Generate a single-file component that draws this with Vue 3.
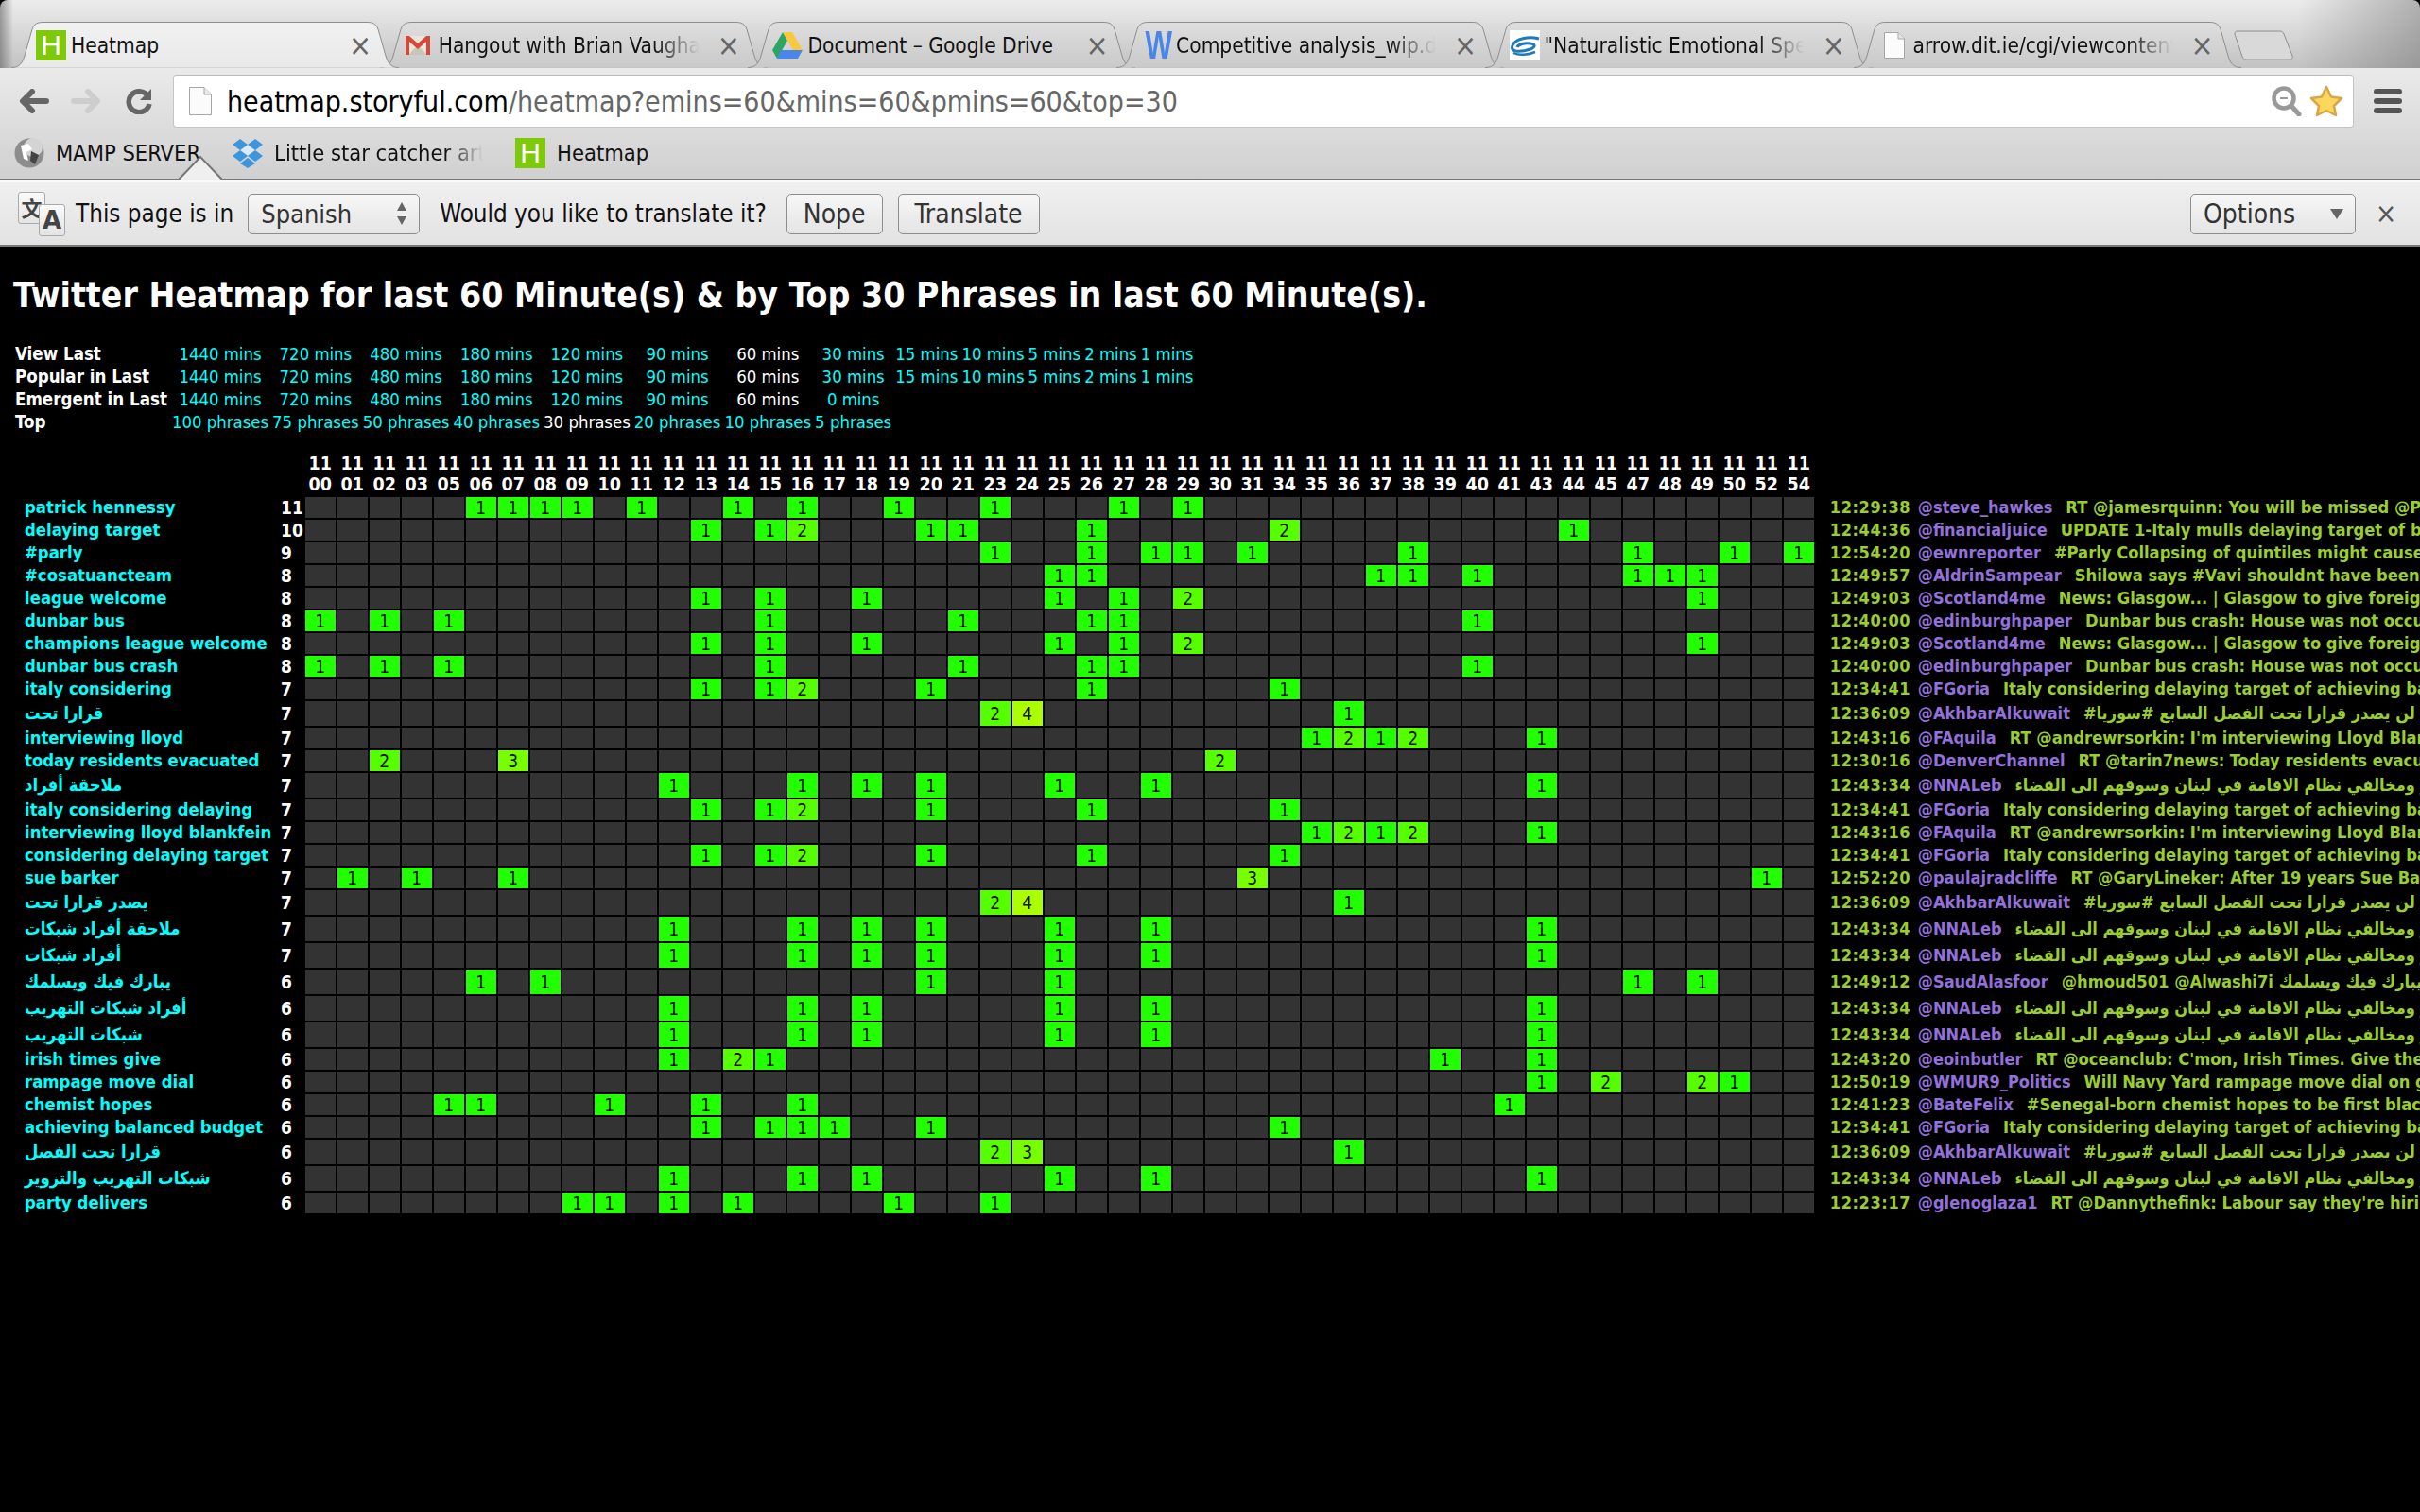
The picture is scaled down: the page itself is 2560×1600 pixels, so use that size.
<template>
  <div class="browser">
    <!-- tab strip -->
    <div class="strip">
      <div v-for="(t, i) in tabs" :key="i" class="tab" :class="{ 'tab--on': i === 0 }">
        <svg class="tab__shape" viewBox="0 0 410 49" width="410" height="49">
          <defs>
            <linearGradient :id="'tg' + i" x1="0" y1="0" x2="0" y2="1">
              <stop offset="0" :stop-color="i === 0 ? '#f1f1f1' : '#dedede'" />
              <stop offset="1" :stop-color="i === 0 ? '#e9e9e9' : '#c9c9c9'" />
            </linearGradient>
          </defs>
          <path d="M0 48.5 C9 48.5 12 43 14 36 L22 8 C24 2 28 .5 34 .5 L376 .5 C382 .5 386 2 388 8 L396 36 C398 43 401 48.5 410 48.5"
            :fill="'url(#tg' + i + ')'" stroke="#8e8e8e" stroke-width="1" />
        </svg>
        <span class="tab__icon" :class="'tab__icon--' + t.icon">
          <span v-if="t.icon === 'h'" class="fav-h">H</span>
          <svg v-else-if="t.icon === 'gmail'" viewBox="0 0 26 20" width="28" height="20">
            <path d="M0 0 H26 V20 H0 Z" fill="#e9e5d9" />
            <path d="M3 20 L13 10 L23 20 Z" fill="#c9c5b8" />
            <path d="M0 0 H4 L13 8 L22 0 H26 V20 H22 V6 L13 14 L4 6 V20 H0 Z" fill="#d3493c" />
          </svg>
          <svg v-else-if="t.icon === 'drive'" viewBox="0 0 32 28" width="32" height="28">
            <path d="M11 0 L0 19 L5 28 L16 9 Z" fill="#2da562" />
            <path d="M11 0 H21 L32 19 H22 Z" fill="#f9c83c" />
            <path d="M9 19 H32 L27 28 H5 Z" fill="#4a86e8" />
          </svg>
          <span v-else-if="t.icon === 'w'" class="fav-w">W</span>
          <svg v-else-if="t.icon === 'link'" viewBox="0 0 32 32" width="32" height="32">
            <rect width="32" height="32" fill="#fff" />
            <path d="M31 9 C20 6 6 9 3 16 C0 23 10 24 22 20 C27 18 28 15 22 14 C16 13 9 15 8 18" fill="none" stroke="#1f7ab8" stroke-width="3" />
            <path d="M4 24 C10 27 20 26 27 23" fill="none" stroke="#1f7ab8" stroke-width="2.5" />
          </svg>
          <svg v-else viewBox="0 0 22 28" width="22" height="28">
            <path d="M.5 .5 H15 L21.5 7 V27.5 H.5 Z" fill="#fbfbfb" stroke="#a6a6a6" />
            <path d="M15 .5 V7 H21.5" fill="#e6e6e6" stroke="#a6a6a6" />
          </svg>
        </span>
        <span class="tab__title" :class="{ 'tab__title--fade': t.fade }">{{ t.title }}</span>
        <span class="tab__close">×</span>
      </div>
      <div class="newtab">
        <svg viewBox="0 0 64 32" width="64" height="32">
          <path d="M1 4 C1 2 2 1 4 1 L49 1 C51 1 52 2 53 4 L62 27 C63 30 61 31 59 31 L13 31 C11 31 10 30 9 28 Z" fill="#d9d9d9" stroke="#8e8e8e" />
        </svg>
      </div>
    </div>

    <!-- toolbar + bookmarks -->
    <div class="top">
      <div class="bar">
        <svg class="nav-ic" viewBox="0 0 32 26" width="32" height="26">
          <path d="M29 13 H5 M14 3 L4 13 L14 23" fill="none" stroke="#666" stroke-width="6" stroke-linecap="round" stroke-linejoin="round" />
        </svg>
        <svg class="nav-ic" viewBox="0 0 32 26" width="32" height="26">
          <path d="M3 13 H27 M18 3 L28 13 L18 23" fill="none" stroke="#cdcdcd" stroke-width="6" stroke-linecap="round" stroke-linejoin="round" />
        </svg>
        <svg class="nav-ic" viewBox="0 0 28 28" width="28" height="28">
          <path d="M23 8 A11 11 0 1 0 25 17" fill="none" stroke="#666" stroke-width="5.5" />
          <path d="M27 1 V13 H15 Z" fill="#666" />
        </svg>
        <div class="omni">
          <svg viewBox="0 0 24 30" width="24" height="30">
            <path d="M.5 .5 H16 L23.5 8 V29.5 H.5 Z" fill="#fbfbfb" stroke="#a6a6a6" />
            <path d="M16 .5 V8 H23.5" fill="#eaeaea" stroke="#a6a6a6" />
          </svg>
          <span class="url"><b>heatmap.storyful.com</b>/heatmap?emins=60&amp;mins=60&amp;pmins=60&amp;top=30</span>
          <svg viewBox="0 0 32 32" width="32" height="32">
            <circle cx="13" cy="13" r="10.5" fill="#fff" stroke="#999" stroke-width="4.5" />
            <path d="M21 21 L29 30" stroke="#999" stroke-width="5" stroke-linecap="round" />
            <path d="M9 13 H17" stroke="#999" stroke-width="2" />
          </svg>
          <svg viewBox="0 0 36 34" width="36" height="34">
            <path d="M18 2 L23 12.5 L34 14 L26 22 L28 32 L18 27 L8 32 L10 22 L2 14 L13 12.5 Z" fill="#fad85c" stroke="#d9a548" stroke-width="2.5" stroke-linejoin="round" />
          </svg>
        </div>
        <div class="menu"><i /><i /><i /></div>
      </div>
      <div class="marks">
        <span class="mark">
          <svg viewBox="0 0 32 32" width="32" height="32">
            <circle cx="16" cy="16" r="15.5" fill="#8d8d8d" />
            <circle cx="20" cy="10" r="10" fill="#d4d4d4" />
            <path d="M7 8 L15 6 L19 12 L13 15 L15 24 L10 22 Z" fill="#fff" />
            <path d="M18 14 L26 18 L22 28 L17 24 Z" fill="#444" />
          </svg>
          MAMP SERVER
        </span>
        <span class="mark">
          <svg viewBox="0 0 32 32" width="32" height="32">
            <path d="M8 1 L16 7 L8 13 L0 7 Z M24 1 L32 7 L24 13 L16 7 Z M8 13 L16 19 L8 25 L0 19 Z M24 13 L32 19 L24 25 L16 19 Z M16 21 L24 27 L16 32 L8 27 Z" fill="#3f95dc" />
            <path d="M16 8 L23 13 L16 18 L9 13 Z" fill="#d9ecfb" />
          </svg>
          <span class="mark__fade">Little star catcher art</span>
        </span>
        <span class="mark">
          <span class="fav-h">H</span>
          Heatmap
        </span>
      </div>
      <svg class="pointer" viewBox="0 0 46 26" width="46" height="26">
        <path d="M0 26 L23 1 L46 26 Z" fill="#efefef" />
        <path d="M0 25 L23 1 L46 25" fill="none" stroke="#777" stroke-width="2" />
      </svg>
    </div>

    <!-- translate infobar -->
    <div class="info">
      <span class="keys">
        <span class="key key--a">文</span>
        <span class="key key--b">A</span>
      </span>
      <span class="info__t1">This page is in</span>
      <span class="sel">
        Spanish
        <svg viewBox="0 0 12 26" width="12" height="26">
          <path d="M6 1 L11 10 H1 Z M6 25 L11 16 H1 Z" fill="#666" />
        </svg>
      </span>
      <span class="info__t2">Would you like to translate it?</span>
      <span class="btn btn--nope">Nope</span>
      <span class="btn btn--tr">Translate</span>
      <span class="btn btn--opt">
        Options
        <svg viewBox="0 0 14 14" width="14" height="14"><path d="M0 2 H14 L7 13 Z" fill="#666" /></svg>
      </span>
      <span class="info__x">×</span>
    </div>
  </div>

  <div class="page">
    <h1>Twitter Heatmap for last 60 Minute(s) &amp; by Top 30 Phrases in last 60 Minute(s).</h1>

    <table class="nav">
      <tr v-for="row in navRows" :key="row.label">
        <td class="nav__lbl">{{ row.label }}</td>
        <td v-for="(c, i) in row.items" :key="i" :class="{ cur: c === row.cur }">{{ c }}</td>
      </tr>
    </table>

    <table class="heat">
      <tr>
        <th colspan="2" />
        <th v-for="c in cols" :key="c" class="hd">11<br />{{ c }}</th>
        <th />
      </tr>
      <tr v-for="(r, i) in rows" :key="i" :class="{ tall: r.tall }">
        <td class="lbl">{{ r.label }}</td>
        <td class="cnt">{{ r.n }}</td>
        <td v-for="c in cols" :key="c" class="cell" :class="r.hits[c] ? 'lv' + r.hits[c] : ''">{{ r.hits[c] }}</td>
        <td class="tw">
          <span class="when">{{ r.tw[0] }}</span><span class="who">{{ r.tw[1] }}</span><span class="msg">{{ r.tw[2] }}</span><bdi v-if="r.tw[3]" dir="rtl">{{ r.tw[3] }}</bdi>
        </td>
      </tr>
    </table>
  </div>
</template>

<script setup>
const tabs = [
  { icon: 'h', title: 'Heatmap' },
  { icon: 'gmail', title: 'Hangout with Brian Vaughan', fade: true },
  { icon: 'drive', title: 'Document – Google Drive' },
  { icon: 'w', title: 'Competitive analysis_wip.docx', fade: true },
  { icon: 'link', title: '"Naturalistic Emotional Speech', fade: true },
  { icon: 'page', title: 'arrow.dit.ie/cgi/viewcontent.cgi?article=1', fade: true }
]

const mins = ['1440 mins', '720 mins', '480 mins', '180 mins', '120 mins', '90 mins', '60 mins', '30 mins', '15 mins', '10 mins', '5 mins', '2 mins', '1 mins']
const navRows = [
  { label: 'View Last', items: mins, cur: '60 mins' },
  { label: 'Popular in Last', items: mins, cur: '60 mins' },
  { label: 'Emergent in Last', items: mins.slice(0, 7).concat('0 mins'), cur: '60 mins' },
  { label: 'Top', items: ['100 phrases', '75 phrases', '50 phrases', '40 phrases', '30 phrases', '20 phrases', '10 phrases', '5 phrases'], cur: '30 phrases' }
]

const cols = ['00', '01', '02', '03', '05', '06', '07', '08', '09', '10', '11', '12', '13', '14', '15', '16', '17', '18', '19', '20', '21', '23', '24', '25', '26', '27', '28', '29', '30', '31', '34', '35', '36', '37', '38', '39', '40', '41', '43', '44', '45', '47', '48', '49', '50', '52', '54']

// hits shared by rows that matched the same tweets
const hLeague = { 13: 1, 15: 1, 18: 1, 25: 1, 27: 1, 29: 2, 49: 1 }
const hDunbar = { '00': 1, '02': 1, '05': 1, 15: 1, 21: 1, 26: 1, 27: 1, 40: 1 }
const hItaly = { 13: 1, 15: 1, 16: 2, 20: 1, 26: 1, 34: 1 }
const hQarar = { 23: 2, 24: 4, 36: 1 }
const hLloyd = { 35: 1, 36: 2, 37: 1, 38: 2, 43: 1 }
const hMul = { 12: 1, 16: 1, 18: 1, 20: 1, 25: 1, 28: 1, 43: 1 }
const hShab = { 12: 1, 16: 1, 18: 1, 25: 1, 28: 1, 43: 1 }

const twScot = ['12:49:03', '@Scotland4me', 'News: Glasgow... | Glasgow to give foreign aid to the city']
const twDun = ['12:40:00', '@edinburghpaper', 'Dunbar bus crash: House was not occupied at the time']
const twIt = ['12:34:41', '@FGoria', 'Italy considering delaying target of achieving balanced budget']
const twAk = ['12:36:09', '@AkhbarAlkuwait', '', 'مجلس الامن لن يصدر قرارا تحت الفصل السابع #سوريا#']
const twFa = ['12:43:16', '@FAquila', "RT @andrewrsorkin: I'm interviewing Lloyd Blankfein today"]
const twNn = ['12:43:34', '@NNALeb', '', 'ملاحقة أفراد شبكات التهريب والتزوير ومخالفي نظام الاقامة في لبنان وسوقهم الى القضاء']

const rows = [
  { label: 'patrick hennessy', n: 11, hits: { '06': 1, '07': 1, '08': 1, '09': 1, 11: 1, 14: 1, 16: 1, 19: 1, 23: 1, 27: 1, 29: 1 }, tw: ['12:29:38', '@steve_hawkes', 'RT @jamesrquinn: You will be missed @PatrickHennessy'] },
  { label: 'delaying target', n: 10, hits: { 13: 1, 15: 1, 16: 2, 20: 1, 21: 1, 26: 1, 34: 2, 44: 1 }, tw: ['12:44:36', '@financialjuice', 'UPDATE 1-Italy mulls delaying target of balanced budget'] },
  { label: '#parly', n: 9, hits: { 23: 1, 26: 1, 28: 1, 29: 1, 31: 1, 38: 1, 47: 1, 50: 1, 54: 1 }, tw: ['12:54:20', '@ewnreporter', '#Parly Collapsing of quintiles might cause problems'] },
  { label: '#cosatuancteam', n: 8, hits: { 25: 1, 26: 1, 37: 1, 38: 1, 40: 1, 47: 1, 48: 1, 49: 1 }, tw: ['12:49:57', '@AldrinSampear', 'Shilowa says #Vavi shouldnt have been suspended by'] },
  { label: 'league welcome', n: 8, hits: hLeague, tw: twScot },
  { label: 'dunbar bus', n: 8, hits: hDunbar, tw: twDun },
  { label: 'champions league welcome', n: 8, hits: hLeague, tw: twScot },
  { label: 'dunbar bus crash', n: 8, hits: hDunbar, tw: twDun },
  { label: 'italy considering', n: 7, hits: hItaly, tw: twIt },
  { label: 'قرارا تحت', n: 7, hits: hQarar, tw: twAk, tall: true },
  { label: 'interviewing lloyd', n: 7, hits: hLloyd, tw: twFa },
  { label: 'today residents evacuated', n: 7, hits: { '02': 2, '07': 3, 30: 2 }, tw: ['12:30:16', '@DenverChannel', 'RT @tarin7news: Today residents evacuated from the'] },
  { label: 'ملاحقة أفراد', n: 7, hits: hMul, tw: twNn, tall: true },
  { label: 'italy considering delaying', n: 7, hits: hItaly, tw: twIt },
  { label: 'interviewing lloyd blankfein', n: 7, hits: hLloyd, tw: twFa },
  { label: 'considering delaying target', n: 7, hits: hItaly, tw: twIt },
  { label: 'sue barker', n: 7, hits: { '01': 1, '03': 1, '07': 1, 31: 3, 52: 1 }, tw: ['12:52:20', '@paulajradcliffe', 'RT @GaryLineker: After 19 years Sue Barker leaves'] },
  { label: 'يصدر قرارا تحت', n: 7, hits: hQarar, tw: twAk, tall: true },
  { label: 'ملاحقة أفراد شبكات', n: 7, hits: hMul, tw: twNn, tall: true },
  { label: 'أفراد شبكات', n: 7, hits: hMul, tw: twNn, tall: true },
  { label: 'يبارك فيك ويسلمك', n: 6, hits: { '06': 1, '08': 1, 20: 1, 25: 1, 47: 1, 49: 1 }, tw: ['12:49:12', '@SaudAlasfoor', '@hmoud501 @Alwashi7i ', 'الله يبارك فيك ويسلمك'], tall: true },
  { label: 'أفراد شبكات التهريب', n: 6, hits: hShab, tw: twNn, tall: true },
  { label: 'شبكات التهريب', n: 6, hits: hShab, tw: twNn, tall: true },
  { label: 'irish times give', n: 6, hits: { 12: 1, 14: 2, 15: 1, 39: 1, 43: 1 }, tw: ['12:43:20', '@eoinbutler', "RT @oceanclub: C'mon, Irish Times. Give them a break"] },
  { label: 'rampage move dial', n: 6, hits: { 43: 1, 45: 2, 49: 2, 50: 1 }, tw: ['12:50:19', '@WMUR9_Politics', 'Will Navy Yard rampage move dial on gun control'] },
  { label: 'chemist hopes', n: 6, hits: { '05': 1, '06': 1, 10: 1, 13: 1, 16: 1, 41: 1 }, tw: ['12:41:23', '@BateFelix', '#Senegal-born chemist hopes to be first black woman'] },
  { label: 'achieving balanced budget', n: 6, hits: { 13: 1, 15: 1, 16: 1, 17: 1, 20: 1, 34: 1 }, tw: twIt },
  { label: 'قرارا تحت الفصل', n: 6, hits: { 23: 2, 24: 3, 36: 1 }, tw: twAk, tall: true },
  { label: 'شبكات التهريب والتزوير', n: 6, hits: hShab, tw: twNn, tall: true },
  { label: 'party delivers', n: 6, hits: { '09': 1, 10: 1, 12: 1, 14: 1, 19: 1, 23: 1 }, tw: ['12:23:17', '@glenoglaza1', "RT @Dannythefink: Labour say they're hiring new staff"] }
]
</script>

<style>
html, body {
  margin: 0;
  height: 100%;
  background: #000;
  overflow: hidden;
}
</style>

<style scoped>
.browser {
  font-family: "DejaVu Sans Condensed", "DejaVu Sans", sans-serif;
  font-size: 22.5px;
  color: #111;
}

/* tab strip */
.strip {
  display: flex;
  height: 72px;
  padding: 23px 0 0 12px;
  box-sizing: border-box;
  background:
    linear-gradient(to right, rgba(90,90,90,.55), rgba(90,90,90,0) 14px),
    linear-gradient(to left, rgba(90,90,90,.4), rgba(90,90,90,0) 130px),
    linear-gradient(#ececec, #c2c2c2);
  border-radius: 8px 8px 0 0;
}
.tab {
  position: relative;
  flex: none;
  width: 410px;
  height: 49px;
  margin-right: -20.3px;
  padding: 0 0 0 26px;
  box-sizing: border-box;
  display: flex;
  align-items: center;
  gap: 5px;
}
.tab--on { z-index: 2; }
.tab__shape {
  position: absolute;
  left: 0;
  top: 0;
}
.tab__icon {
  position: relative;
  display: flex;
  flex: none;
  align-items: center;
}
.tab__icon--gmail { margin-right: 3px; }
.tab__icon--page { margin: 0 4px 0 6px; }
.tab__title {
  position: relative;
  flex: 1;
  min-width: 0;
  overflow: hidden;
  white-space: nowrap;
  padding-top: 1px;
}
.tab__title--fade {
  -webkit-mask-image: linear-gradient(to right, #000 80%, transparent 97%);
  mask-image: linear-gradient(to right, #000 80%, transparent 97%);
}
.tab__close {
  position: relative;
  flex: none;
  width: 20px;
  margin: 0 33px 0 6px;
  text-align: center;
  font-size: 32px;
  line-height: 1;
  color: #666;
}
.newtab {
  flex: none;
  margin: 9px 0 0 13px;
  display: flex;
}
.fav-h {
  display: block;
  width: 32px;
  height: 32px;
  background: #7dc90a;
  color: #fff;
  font: 30px/32px "Liberation Sans", sans-serif;
  text-align: center;
}
.fav-w {
  display: block;
  width: 32px;
  height: 32px;
  color: #4a86e8;
  font: bold 42px/32px "Liberation Sans", sans-serif;
  text-align: center;
  transform: scaleX(.72);
  transform-origin: center;
  white-space: nowrap;
}

/* toolbar */
.top {
  position: relative;
  height: 119px;
  box-sizing: border-box;
  border-bottom: 2px solid #777;
  background: linear-gradient(#eaeaea, #d0d0d0);
}
.bar {
  display: flex;
  align-items: center;
  height: 70px;
  padding: 0 19px 0 20px;
  box-sizing: border-box;
}
.nav-ic { flex: none; margin-right: 23px; }
.nav-ic:nth-child(3) { margin-right: 22px; margin-left: 3px; }
.omni {
  flex: 1;
  height: 56px;
  display: flex;
  align-items: center;
  gap: 8px;
  padding: 0 10px 0 16px;
  background: #fff;
  border: 1px solid #c4c4c4;
  border-top-color: #bbb;
  border-radius: 4px;
  box-sizing: border-box;
}
.url {
  flex: 1;
  padding-left: 8px;
  font-size: 30px;
  color: #666;
  white-space: nowrap;
}
.url b { font-weight: normal; color: #000; }
.menu {
  flex: none;
  width: 30px;
  margin-left: 21px;
  display: flex;
  flex-direction: column;
  gap: 4px;
}
.menu i {
  display: block;
  height: 6px;
  border-radius: 3px;
  background: #555;
}
.marks {
  display: flex;
  align-items: center;
  gap: 34px;
  height: 32px;
  margin-top: 4px;
  padding-left: 15px;
  font-size: 23.5px;
}
.mark {
  display: flex;
  align-items: center;
  gap: 12px;
  white-space: nowrap;
}
.mark__fade {
  width: 221px;
  overflow: hidden;
  -webkit-mask-image: linear-gradient(to right, #000 82%, transparent 100%);
  mask-image: linear-gradient(to right, #000 82%, transparent 100%);
}
.pointer {
  position: absolute;
  left: 189px;
  bottom: -2px;
}

/* infobar */
.info {
  position: relative;
  display: flex;
  align-items: center;
  height: 70px;
  padding: 0 21px 0 19px;
  box-sizing: border-box;
  background: linear-gradient(#f0f0f0, #e2e2e2);
  border-top: 2px solid #fafafa;
  border-bottom: 2px solid #777;
  font-size: 25.8px;
}
.keys {
  position: relative;
  flex: none;
  width: 50px;
  height: 47px;
}
.key {
  position: absolute;
  display: block;
  text-align: center;
  color: #444;
  background: linear-gradient(#fafafa, #e4e4e4);
  border: 1px solid #aaa;
  border-radius: 3px;
  box-sizing: border-box;
}
.key--a {
  left: 0;
  top: 0;
  width: 29px;
  height: 34px;
  font: bold 22px/30px "Noto Sans CJK SC", sans-serif;
}
.key--b {
  left: 22px;
  top: 13px;
  width: 28px;
  height: 34px;
  font: bold 26px/32px "DejaVu Sans", sans-serif;
}
.info__t1 { margin-left: 11px; }
.sel, .btn {
  display: flex;
  align-items: center;
  justify-content: space-between;
  height: 43px;
  box-sizing: border-box;
  border: 1px solid #8e8e8e;
  border-radius: 5px;
  background: linear-gradient(#f7f7f7, #e4e4e4);
  color: #333;
}
.sel {
  width: 182px;
  margin-left: 15px;
  padding: 0 12px 0 13px;
  font-size: 27px;
}
.info__t2 { margin-left: 21px; }
.btn { padding: 0 17px; font-size: 28px; }
.btn--nope { margin-left: 21px; }
.btn--tr { margin-left: 16px; }
.btn--opt {
  width: 175px;
  margin-left: auto;
  padding: 0 12px 0 13px;
}
.info__x {
  width: 30px;
  margin-left: 17px;
  font-size: 30px;
  line-height: 1;
  color: #555;
  text-align: center;
}

/* page */
.page {
  padding: 0 0 0 14px;
  font-family: "DejaVu Sans Condensed", "DejaVu Sans", sans-serif;
  font-weight: bold;
  font-size: 18px;
  color: #fff;
}
h1 {
  margin: 0;
  padding-top: 30px;
  font-size: 37.1px;
  line-height: 44px;
  white-space: nowrap;
}
.nav {
  margin: 27px 0 0 -1px;
  border-spacing: 2px;
  border-collapse: separate;
  line-height: 22px;
}
.nav td {
  padding: 0 1px;
  color: #0ff;
  font-weight: normal;
  font-size: 18.4px;
  text-align: center;
  white-space: nowrap;
}
.nav td.nav__lbl {
  color: #fff;
  font-weight: bold;
  font-size: 18.6px;
  text-align: left;
  padding-right: 2px;
}
.nav td.cur { color: #fff; }
.heat {
  margin: 18px 0 0 10px;
  border-spacing: 2px;
  border-collapse: separate;
  table-layout: auto;
}
.heat th, .heat td { padding: 0; }
.hd {
  width: 32px;
  min-width: 32px;
  text-align: center;
  font-size: 19.5px;
  line-height: 22px;
  font-weight: bold;
}
tr > td { height: 22px; line-height: 22px; }
tr.tall > td { height: 26px; }
.lbl {
  width: 269px;
  min-width: 269px;
  color: #0ff;
  font-size: 18.4px;
  text-align: left;
  white-space: nowrap;
}
.cnt { width: 23px; min-width: 23px; font-size: 19px; text-align: left; }
.cell {
  background: #333;
  color: #111;
  font-size: 19px;
  text-align: center;
  font-weight: normal;
}
.lv1 { background: #22ff00; }
.lv2 { background: #55ff00; }
.lv3 { background: #77ff00; }
.lv4 { background: #aaff00; }
.tw {
  padding-left: 15px !important;
  color: #9acd32;
  white-space: nowrap;
}
.when {
  display: inline-block;
  width: 93px;
  letter-spacing: .6px;
}
.who { color: #9370db; margin-right: 14px; }
.msg { font-size: 18.2px; }
</style>
